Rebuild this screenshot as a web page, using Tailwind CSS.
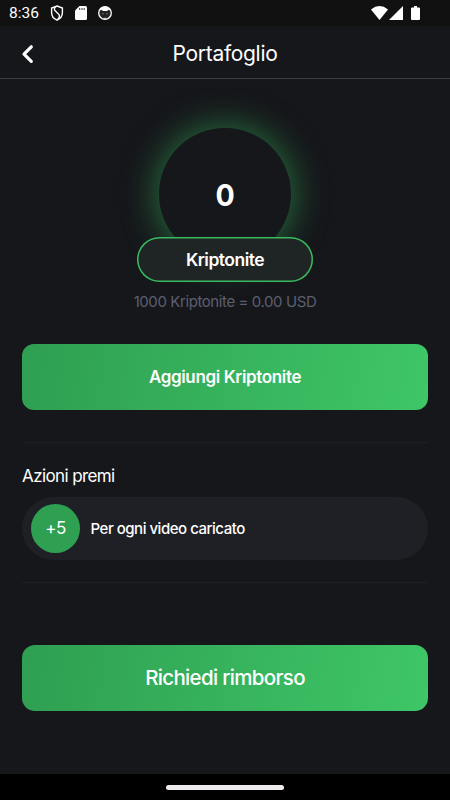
<!DOCTYPE html>
<html lang="it">
<head>
<meta charset="utf-8">
<title>Portafoglio</title>
<script src="https://cdn.jsdelivr.net/npm/@tailwindcss/browser@4"></script>
</head>
<body class="w-[450px] h-[800px] overflow-hidden bg-[#16171b] text-white font-['Inter',sans-serif]">
<div class="flex h-[800px] flex-col">
  <div class="flex h-[26px] shrink-0 items-center bg-[#111111] pl-[9px] font-['Roboto',sans-serif]">
    <span class="w-[41px] text-[15.5px] leading-none pt-[2px]">8:36</span>
    <svg class="w-[14px] h-[18px]" viewBox="0 0 14 18" fill="none" stroke="white" stroke-width="1.4"><path d="M7 2 12.4 4V8.6C12.4 12 10.2 14.9 7 16.2 3.8 14.9 1.6 12 1.6 8.6V4Z"/><path d="M6 2.5Q3.2 4.6 5.2 6.8L9 10.6Q10.4 12.8 7.4 15.8"/></svg>
    <svg class="ml-[11px] w-[12px] h-[16px]" viewBox="0 0 12 16"><path fill="white" d="M4.5 1H10.5Q12 1 12 2.5V13.5Q12 15 10.5 15H1.5Q0 15 0 13.5V5.5Z"/><path d="M4.7 3V5M7 3V5M9.2 3V5" stroke="#333" stroke-width="1"/></svg>
    <svg class="ml-[11px] w-[14px] h-[14px]" viewBox="0 0 14 14"><circle cx="7" cy="7" r="6.3" fill="#222" stroke="white" stroke-width="1.3"/><path fill="white" d="M1 5Q2.5 1 7 .8 11.5 1 13 5L10.8 3.8 9 5H5L3.2 3.8Z"/><path fill="#ccc" d="M4.2 7.2 5.8 7.8 5 8.4ZM9.8 7.2 8.2 7.8 9 8.4ZM4 12.2Q7 11.4 10 12.2L8.8 13H5.2Z"/></svg>
    <svg class="ml-auto w-[17px] h-[14px]" viewBox="0 0 17 14" fill="white"><path d="M0 3.4Q8.5-3.4 17 3.4L8.5 14Z"/></svg>
    <svg class="ml-[1px] w-[14px] h-[14px]" viewBox="0 0 14 14" fill="white"><path d="M14 0V14H0Z"/></svg>
    <svg class="ml-[8px] mr-[30px] w-[9px] h-[14px]" viewBox="0 0 9 14" fill="white"><path d="M3 0H6V1.4H8Q9 1.4 9 2.4V13Q9 14 8 14H1Q0 14 0 13V2.4Q0 1.4 1 1.4H3Z"/></svg>
  </div>
  <header class="relative flex h-[53px] shrink-0 items-center justify-center border-b border-[#3a3d47] pt-[3px]">
    <svg class="absolute left-[21px] top-[18px] w-[13px] h-[20px]" viewBox="0 0 13 20" fill="none" stroke="white" stroke-width="3.2" stroke-linecap="round" stroke-linejoin="round"><path d="M10.3 2.8 3 10.2 10.3 17.4"/></svg>
    <h1 class="text-[21px] leading-[26px] tracking-[-0.3px]">Portafoglio</h1>
  </header>
  <main class="flex flex-1 flex-col px-[22px] pt-[49px]">
    <section class="flex flex-col items-center">
      <div class="flex size-[132px] items-center justify-center rounded-full bg-[#16171b] pt-[1px] text-[30px] font-bold leading-none shadow-[0_0_33px_3px_#2f9f50a0]"><span class="scale-x-95">0</span></div>
      <div class="relative -mt-[23px] flex h-[45px] w-[176px] items-center justify-center rounded-full bg-[#1f2525] pt-[1px] text-[17.5px] font-semibold tracking-[-0.5px] shadow-[inset_0_0_0_1.5px_#39ba5e]">Kriptonite</div>
      <p class="mt-[10px] text-[15px] leading-[20px] tracking-[-0.41px] text-[#5c5f71]">1000 Kriptonite = 0.00 USD</p>
    </section>
    <button class="mt-[32px] h-[66px] shrink-0 rounded-[12px] bg-[linear-gradient(100deg,#2f9f51,#3ec667)] pt-[1px] text-[17px] font-semibold tracking-[-0.35px]">Aggiungi Kriptonite</button>
    <section class="mt-[32px] h-[141px] border-y border-[#1d1f24] pt-[22px]">
      <h2 class="text-[17px] leading-[22px] tracking-[-0.6px]">Azioni premi</h2>
      <div class="mt-[10px] flex h-[63px] items-center rounded-full bg-[#1f2025] pl-[9px]">
        <span class="flex size-[49px] items-center justify-center rounded-full bg-[#2fa052] pt-[1px] text-[17px] tracking-[-0.6px]">+5</span>
        <span class="ml-[10.5px] pt-[1px] text-[15px] font-medium tracking-[-0.48px]">Per ogni video caricato</span>
      </div>
    </section>
    <button class="mt-[61.5px] h-[66px] shrink-0 rounded-[13px] bg-[linear-gradient(100deg,#2f9f51,#3ec667)] pt-[1px] text-[20.5px] font-medium tracking-[-0.67px]">Richiedi rimborso</button>
  </main>
  <footer class="flex h-[26px] shrink-0 items-center justify-center bg-black"><div class="h-[5px] w-[118px] rounded-full bg-[#eeeaee]"></div></footer>
</div>
</body>
</html>
